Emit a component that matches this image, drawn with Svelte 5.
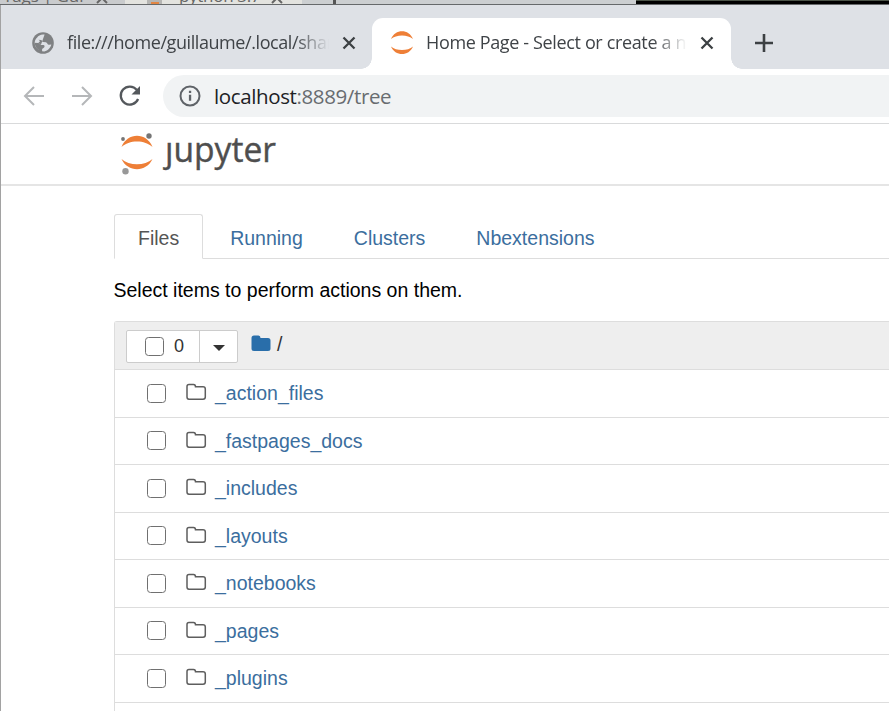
<script>
  const folders = ['_action_files', '_fastpages_docs', '_includes', '_layouts', '_notebooks', '_pages', '_plugins'];
  const tabs = ['Files', 'Running', 'Clusters', 'Nbextensions'];
</script>

{#snippet close()}
  <svg class="close" width="14" height="14" viewBox="0 0 14 14"><path d="M1.5 1.5 12.5 12.5M12.5 1.5 1.5 12.5" fill="none" stroke="#3c4043" stroke-width="2.3" /></svg>
{/snippet}

<div class="screen">
  <div class="behind">
    <span class="peek first">Tags | Gui</span>
    <span class="peek second">python 3.7</span>
    <svg class="scraps" width="636" height="4" viewBox="0 0 636 4">
      <path d="M97 3 102 -2 107 3M272 3 277 -2 282 3" fill="none" stroke="#666" stroke-width="2" />
      <path d="M147 0h15v4h-15z" fill="#b5b5b3" /><path d="M151 2h8v2h-8z" fill="#e18543" />
      <path d="M333 0h3v4h-3z" fill="#555" />
    </svg>
    <div class="black"></div>
  </div>

  <div class="window">
    <div class="tabstrip">
      <div class="btab inactive">
        <svg class="globe" width="22" height="22" viewBox="0 0 22 22">
          <circle cx="11" cy="11" r="10.800" fill="#7f8183" />
          <path d="M12.600 2.600C9 2 6.500 3.600 5.200 5.400c-.8 1.300-.6 2.300.8 2.400l3 .1c1.100 0 .9 1.900 2.300 2.200l2.600.2c1.300.2 1.400 2.600 3.200 2.500l2.200-.3c-.6 3.100-3.200 6.200-7 6.900l-2.200-.2v-2.300l2-1.500c.9-.9.600-2.100-.8-2.300l-2.400-.2c-1.300-.2-1.300-1.700-2.600-1.900l-3.600-.3c0 3.400 1.900 6 4.400 7.300" fill="#dee1e6" />
          <path d="M5.200 5.400C3.400 7 2.700 8.800 2.700 10.700l3.600.3 1.700-1.700-1.200-1.500Z" fill="#dee1e6" />
          <path d="M2.700 11h3.700c1.200.2 1.300 1.700 2.600 1.900l2.400.2-3.500 5.500C5 17.400 2.900 14.500 2.700 11Z" fill="#7f8183" />
        </svg>
        <span class="title t1">file:///home/guillaume/.local/share</span>
        {@render close()}
      </div>
      <div class="btab active">
        <svg class="jup" width="24" height="24" viewBox="0 0 24 24" fill="#ee7f37"><path d="M1 8C5-2.500 19-2.500 23 8 18 3.300 6 3.300 1 8ZM1 15.500c4 10 18 10 22 0-5 4.700-17 4.700-22 0Z" /></svg>
        <span class="title t2">Home Page - Select or create a notebook</span>
        {@render close()}
      </div>
      <svg class="plus" width="20" height="20" viewBox="0 0 20 20"><path d="M10 1v18M1 10h18" fill="none" stroke="#3c4043" stroke-width="2.6" /></svg>
    </div>

    <div class="toolbar">
      <svg class="back" width="22" height="20" viewBox="0 0 22 20"><path d="M21 10H2M11 1 2 10l9 9" fill="none" stroke="#b5b7b9" stroke-width="2" /></svg>
      <svg class="forward" width="22" height="20" viewBox="0 0 22 20"><path d="M1 10h19M11 1l9 9-9 9" fill="none" stroke="#b5b7b9" stroke-width="2" /></svg>
      <svg class="reload" width="22" height="22" viewBox="0 0 22 22"><path d="M17.8 4.9A9 9 0 1 0 19.1 14" fill="none" stroke="#54585c" stroke-width="2.3" /><path d="M21 1v8.5h-8.5Z" fill="#54585c" /></svg>
      <div class="omnibox">
        <svg width="22" height="22" viewBox="0 0 22 22"><circle cx="11" cy="11" r="9.5" fill="none" stroke="#5f6368" stroke-width="2" /><path d="M9.9 5.7h2.3v2.4H9.9zM9.9 9.8h2.3v6H9.9z" fill="#5f6368" /></svg>
        <span class="url">localhost<span>:8889/tree</span></span>
      </div>
    </div>

    <header>
      <svg width="170" height="50" viewBox="0 0 170 50">
        <path d="M7.500 18C13.500 3 32.500 3 38.500 18 31 10.500 15 10.500 7.500 18ZM7.500 30C13.500 43.500 32.500 43.500 38.500 30 31 37 15 37 7.500 30Z" fill="#ee7f37" />
        <circle cx="9" cy="10" r="1.900" fill="#757575" /><circle cx="35" cy="7" r="2.700" fill="#757575" /><circle cx="11.500" cy="42.300" r="3.200" fill="#989898" />
        <text x="51" y="33" textLength="111" lengthAdjust="spacingAndGlyphs">ȷupyter</text>
      </svg>
    </header>

    <main>
      <nav>
        {#each tabs as tab, i}<a class:selected={i === 0}>{tab}</a>{/each}
      </nav>
      <p>Select items to perform actions on them.</p>
      <div class="list">
        <div class="listhead">
          <div class="buttons">
            <div class="select"><span class="box"></span><span>0</span></div>
            <div class="drop"><svg width="12" height="6" viewBox="0 0 12 6"><path d="M0 0h12L6 6Z" fill="#333" /></svg></div>
          </div>
          <svg class="home" width="20" height="17" viewBox="0 0 20 17"><path d="M3 .5h4.500Q9.500.5 9.500 3H17q2.500 0 2.500 2.500v8q0 2.500-2.500 2.500H3Q.5 16 .5 13.500V3Q.5.5 3 .5Z" fill="#296eaa" /></svg>
          <span class="slash">/</span>
        </div>
        {#each folders as folder}
          <div class="row">
            <span class="box"></span>
            <svg class="folder" width="21" height="18" viewBox="0 0 21 18"><path d="M3 1.500h4.500q2 0 2 2.300h7.500q2.300 0 2.300 2.200v8q0 2.200-2.300 2.200H3q-2 0-2-2.200V3.600Q1 1.500 3 1.500Z" fill="none" stroke="#5e5e5e" stroke-width="1.500" /></svg>
            <a>{folder}</a>
          </div>
        {/each}
        <div class="row"></div>
      </div>
    </main>
  </div>
</div>

<style>
  :global(body) { overflow: hidden; background: #fff; }
  * { box-sizing: border-box; }
  svg { display: block; flex: none; }
  .screen { width: 889px; height: 711px; overflow: hidden; font-family: "Liberation Sans", Arial, sans-serif; background: #fff; }
  .behind { height: 5px; position: relative; overflow: hidden; background: linear-gradient(90deg, #c9cbcd 0 125px, #e3e3df 125px 302px, #cccfd1 302px); border-bottom: 1px solid #66696b; }
  .peek { position: absolute; top: -15px; font: 17px/22px "Open Sans", sans-serif; color: #666; white-space: nowrap; }
  .first { left: 3px; letter-spacing: -.1px; }
  .second { left: 179px; letter-spacing: -.3px; }
  .scraps { position: absolute; left: 0; top: 0; }
  .black { position: absolute; left: 636px; right: 0; top: 0; height: 4px; background: #000; border-top: 1px solid #4b5347; }
  .window { height: 706px; border-left: 1px solid #a2a2a2; }
  .tabstrip { height: 64px; background: #dee1e6; display: flex; align-items: flex-end; }
  .btab { display: flex; align-items: center; position: relative; height: 51px; }
  .btab svg { margin-bottom: 1px; }
  .inactive { width: 371px; padding-left: 31px; }
  .active { width: 359px; padding-left: 18px; background: #fff; border-radius: 11px 11px 0 0; }
  .active::before, .active::after { content: ''; position: absolute; bottom: 0; width: 11px; height: 11px; }
  .active::before { left: -11px; background: radial-gradient(circle at 0 0, transparent 10.500px, #fff 11px); }
  .active::after { right: -11px; background: radial-gradient(circle at 100% 0, transparent 10.500px, #fff 11px); }
  .title { font: 18px/26px "Open Sans", "Noto Sans", sans-serif; padding-bottom: 3px; color: #3f4347; white-space: nowrap; overflow: hidden; mask-image: linear-gradient(90deg, #000 calc(100% - 34px), transparent); }
  .t1 { margin-left: 13px; width: 262px; letter-spacing: -.42px; }
  .t2 { margin-left: 12px; width: 261px; letter-spacing: -.36px; }
  .close { margin-left: 13px; }
  .t2 + .close { margin-left: 13px; }
  .plus { margin: 0 0 16px 23px; }
  .toolbar { height: 55px; border-bottom: 1px solid #d9dadb; display: flex; align-items: center; padding-left: 22px; }
  .forward { margin-left: 26px; }
  .reload { margin-left: 26px; }
  .omnibox { height: 42px; margin-left: 22px; flex: 1; border-radius: 21px 0 0 21px; background: #f1f3f4; display: flex; align-items: center; padding-left: 16px; }
  .url { margin-left: 13px; font: 20.500px/28px "Open Sans", "Noto Sans", sans-serif; letter-spacing: -.38px; color: #202124; white-space: nowrap; }
  .url span { color: #686c70; }
  header { height: 62px; padding: 5px 0 0 113px; border-bottom: 2px solid #e5e5e5; }
  header text { font: 500 34px "Open Sans", "Noto Sans", sans-serif; fill: #4e4e4e; stroke: #4e4e4e; stroke-width: .4px; }
  main { padding: 28px 0 0 113px; }
  nav { display: flex; height: 45px; border-bottom: 1px solid #ddd; gap: 3px; }
  nav a { height: 45px; padding: 0 23px; border: 1px solid transparent; line-height: 46px; font-size: 19.500px; color: #3b6e9e; }
  nav .selected { color: #555; background: #fff; border-color: #ddd #ddd #fff; border-radius: 3px 3px 0 0; }
  p { margin: 20px 0 20px -.5px; font-size: 19.500px; line-height: 22px; color: #000; }
  .list { border: 1px solid #ddd; border-right: 0; border-bottom: 0; border-radius: 3px 0 0; }
  .listhead { height: 47px; background: #eee; display: flex; align-items: center; padding: 2px 0 0 11px; }
  .buttons { display: flex; width: 112px; height: 33px; border: 1px solid #ccc; border-radius: 2px; background: #fff; }
  .select { width: 72px; display: flex; align-items: center; gap: 10px; padding-left: 18px; font-size: 18px; color: #333; }
  .box { display: block; width: 19px; height: 19px; border: 1px solid #707070; border-radius: 3.500px; background: #fff; flex: none; }
  .drop { flex: 1; border-left: 1px solid #ccc; display: flex; align-items: center; justify-content: center; padding-top: 2px; }
  .home { margin: -6px 0 0 13px; }
  .slash { margin: -4px 0 0 6px; font-size: 19.500px; color: #333; }
  .row { height: 47.500px; border-top: 1px solid #ddd; display: flex; align-items: center; padding-left: 32px; }
  .folder { margin: -2px 0 0 20px; }
  .row a { margin-left: 8px; font-size: 19.500px; line-height: 24px; color: #3b6e9e; }
</style>
